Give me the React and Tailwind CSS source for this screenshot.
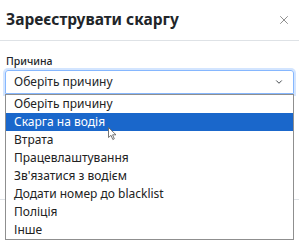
import { X, ChevronDown } from "lucide-react";

const reasons = [
  "Оберіть причину",
  "Скарга на водія",
  "Втрата",
  "Працевлаштування",
  "Зв'язатися з водієм",
  "Додати номер до blacklist",
  "Поліція",
  "Інше",
];

export default function App() {
  return (
    <div className="relative h-[242px] w-[299px] overflow-hidden bg-white text-[#212529] font-['Noto_Sans',sans-serif]">
      {/* HEADER */}
      <div className="flex h-[41px] items-center justify-between border-b border-[#dee2e6] pl-[6px] pr-[8px]">
        <h2 className="text-[15.5px] font-bold leading-none">Зареєструвати скаргу</h2>
        <X className="h-[14px] w-[14px] text-[#777]" strokeWidth={1.4} />
      </div>

      {/* BODY */}
      <div className="px-[5px] pt-[13px]">
        <label className="block pl-[1px] text-[10.5px] font-medium leading-[14px]">Причина</label>
        <div className="relative mt-[2px]">
          <div className="flex h-[24px] items-center justify-between rounded-t-[3px] border border-[#86b7fe] pl-[8px] pr-[9px] text-[12px] shadow-[0_0_0_2px_rgba(13,110,253,0.18)]">
            <span>Оберіть причину</span>
            <ChevronDown className="h-[10px] w-[10px] text-[#343a40]" strokeWidth={2.2} />
          </div>

          {/* DROPDOWN */}
          <ul className="absolute left-0 right-0 top-[24px] z-10 border border-[#8f8f8f] bg-white text-[12px]">
            {reasons.map((r, i) => (
              <li
                key={r}
                className={`flex h-[18px] items-center pl-[8px] ${
                  i === 1 ? "bg-[#1a67cb] text-white" : "text-[#222]"
                }`}
              >
                {r}
              </li>
            ))}
          </ul>
        </div>
      </div>

      {/* FOOTER line behind dropdown */}
      <div className="mt-[105px] border-t border-[#dee2e6]" />

      {/* cursor */}
      <svg className="absolute left-[108px] top-[127px] z-20" width="9" height="14" viewBox="0 0 9 14">
        <path d="M0.5 0.5 L0.5 10.5 L3 8.3 L4.8 12.5 L6.3 11.8 L4.6 7.8 L8 7.8 Z" fill="white" stroke="#666" strokeWidth="0.9" strokeLinejoin="round" />
      </svg>
    </div>
  );
}
